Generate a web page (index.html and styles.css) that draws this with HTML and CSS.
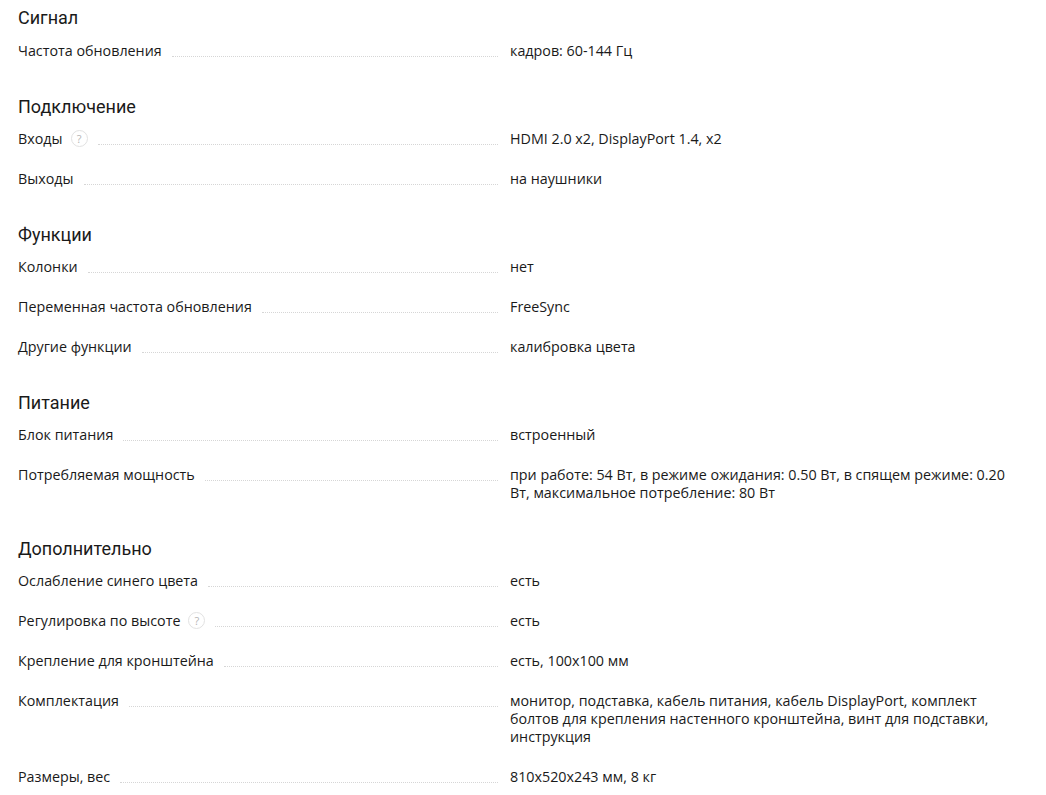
FILE: index.html
```html
<!DOCTYPE html>
<html lang="ru">
<head>
<meta charset="utf-8">
<link rel="stylesheet" href="styles.css">
</head>
<body>
<div class="specs">
  <section class="group">
    <h2 class="group-title">Сигнал</h2>
    <div class="row"><div class="label"><span class="label-text">Частота обновления</span><span class="dots"></span></div><div class="value">кадров: 60-144 Гц</div></div>
  </section>
  <section class="group">
    <h2 class="group-title">Подключение</h2>
    <div class="row"><div class="label"><span class="label-text">Входы</span><span class="hint">?</span><span class="dots"></span></div><div class="value">HDMI 2.0 x2, DisplayPort 1.4, x2</div></div>
    <div class="row"><div class="label"><span class="label-text">Выходы</span><span class="dots"></span></div><div class="value">на наушники</div></div>
  </section>
  <section class="group">
    <h2 class="group-title">Функции</h2>
    <div class="row"><div class="label"><span class="label-text">Колонки</span><span class="dots"></span></div><div class="value">нет</div></div>
    <div class="row"><div class="label"><span class="label-text">Переменная частота обновления</span><span class="dots"></span></div><div class="value">FreeSync</div></div>
    <div class="row"><div class="label"><span class="label-text">Другие функции</span><span class="dots"></span></div><div class="value">калибровка цвета</div></div>
  </section>
  <section class="group">
    <h2 class="group-title">Питание</h2>
    <div class="row"><div class="label"><span class="label-text">Блок питания</span><span class="dots"></span></div><div class="value">встроенный</div></div>
    <div class="row"><div class="label"><span class="label-text">Потребляемая мощность</span><span class="dots"></span></div><div class="value">при работе: 54 Вт, в режиме ожидания: 0.50 Вт, в спящем режиме: 0.20 Вт, максимальное потребление: 80 Вт</div></div>
  </section>
  <section class="group">
    <h2 class="group-title">Дополнительно</h2>
    <div class="row"><div class="label"><span class="label-text">Ослабление синего цвета</span><span class="dots"></span></div><div class="value">есть</div></div>
    <div class="row"><div class="label"><span class="label-text">Регулировка по высоте</span><span class="hint">?</span><span class="dots"></span></div><div class="value">есть</div></div>
    <div class="row"><div class="label"><span class="label-text">Крепление для кронштейна</span><span class="dots"></span></div><div class="value">есть, 100x100 мм</div></div>
    <div class="row"><div class="label"><span class="label-text">Комплектация</span><span class="dots"></span></div><div class="value">монитор, подставка, кабель питания, кабель DisplayPort, комплект болтов для крепления настенного кронштейна, винт для подставки, инструкция</div></div>
    <div class="row"><div class="label"><span class="label-text">Размеры, вес</span><span class="dots"></span></div><div class="value">810x520x243 мм, 8 кг</div></div>
  </section>
</div>
</body>
</html>
```
FILE: styles.css
```css
html, body {
  margin: 0;
  padding: 0;
  background: #fff;
}
body {
  font-family: "Open Sans", "Noto Sans", sans-serif;
  color: #1a1a1a;
}
.specs {
  padding: 6px 30px 0 18px;
}
.group + .group {
  margin-top: 12px;
}
.group-title {
  margin: 0 0 11px;
  padding-top: 1px;
  font-family: Roboto, "Noto Sans", sans-serif;
  font-size: 18px;
  line-height: 24px;
  font-weight: 400;
  color: #1a1a1a;
}
.group:first-child .group-title {
  padding-top: 0;
  margin-bottom: 12px;
}
.row {
  display: grid;
  grid-template-columns: 480px 1fr;
  column-gap: 12px;
  padding-bottom: 22px;
  font-size: 14.3px;
  line-height: 18px;
}
.group:last-child .row:last-child {
  padding-bottom: 0;
}
.label {
  display: flex;
  align-items: flex-start;
}
.label-text {
  white-space: nowrap;
}
.hint {
  flex: none;
  width: 17px;
  height: 17px;
  margin: 0 0 0 8px;
  border: 1px solid #e2e2e2;
  border-radius: 50%;
  box-sizing: border-box;
  font-size: 11px;
  line-height: 15px;
  text-align: center;
  color: #b5b5b5;
}
.dots {
  flex: 1;
  margin: 14px 0 0 10px;
  border-bottom: 1px dotted #d6d6d6;
}
.value {
  color: #1a1a1a;
}
```
